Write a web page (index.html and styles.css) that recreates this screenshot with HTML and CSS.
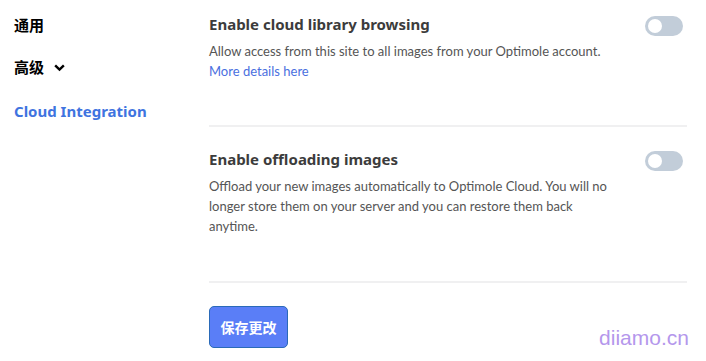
FILE: index.html
```html
<!DOCTYPE html>
<html lang="zh">
<head>
    <meta charset="UTF-8">
    <title>Optimole Settings</title>
    <link rel="stylesheet" href="styles.css">
</head>
<body>

<div class="layout">
    <nav class="sidebar">
        <a class="nav-item" href="#">通用</a>
        <a class="nav-item" href="#">高级 <svg class="chevron" width="13" height="13" viewBox="0 0 12 12"><path d="M2 4l4 4 4-4" fill="none" stroke="#000" stroke-width="2.2"/></svg></a>
        <a class="nav-item active" href="#">Cloud Integration</a>
    </nav>

    <main class="content">
        <div class="setting">
            <div class="setting-text">
                <h3>Enable cloud library browsing</h3>
                <p>Allow access from this site to all images from your Optimole account.<br><a href="#">More details here</a></p>
            </div>
            <span class="toggle"></span>
        </div>

        <div class="setting">
            <div class="setting-text">
                <h3>Enable offloading images</h3>
                <p>Offload your new images automatically to Optimole Cloud. You will no longer store them on your server and you can restore them back anytime.</p>
            </div>
            <span class="toggle"></span>
        </div>

        <div class="actions">
            <button class="save">保存更改</button>
            <span class="watermark">diiamo.cn</span>
        </div>
    </main>
</div>

</body>
</html>
```

FILE: styles.css
```css
body {
    margin: 0;
    font-family: 'Noto Sans', 'Noto Sans CJK SC', sans-serif;
    background: #fff;
    color: #3c3c3c;
}
.layout {
    display: flex;
}
.sidebar {
    width: 195px;
    padding: 13px 0 0 14px;
    display: flex;
    flex-direction: column;
    gap: 18px;
}
.nav-item {
    font-size: 15px;
    font-weight: 700;
    color: #000;
    text-decoration: none;
    line-height: 24px;
    display: flex;
    align-items: center;
    gap: 9px;
}
.nav-item.active {
    color: #3f74e0;
    margin-top: 2px;
}
.content {
    width: 478px;
}
.setting {
    display: flex;
    justify-content: space-between;
    align-items: flex-start;
    border-bottom: 2px solid #f0f0f1;
}
.setting:first-child {
    padding: 13px 0 44px;
}
.setting + .setting {
    padding: 21px 0 45px;
}
.setting-text h3 {
    margin: 0;
    font-size: 15px;
    font-weight: 700;
    line-height: 22px;
    color: #3c3c3c;
}
.setting-text p {
    margin: 6px 0 0;
    width: 410px;
    font-family: 'Lato', sans-serif;
    font-size: 13px;
    line-height: 20px;
    color: #555;
}
.setting-text a {
    color: #4a6fe0;
    text-decoration: none;
}
.toggle {
    position: relative;
    width: 38px;
    height: 20px;
    margin: 3px 4px 0 0;
    border-radius: 10px;
    background: #c2cdd9;
}
.toggle::after {
    content: "";
    position: absolute;
    left: 3px;
    top: 3px;
    width: 14px;
    height: 14px;
    border-radius: 50%;
    background: #fff;
}
.actions {
    display: flex;
    justify-content: space-between;
    align-items: flex-end;
    padding-top: 23px;
}
.save {
    width: 79px;
    height: 42px;
    border: 1px solid #2a6ab8;
    border-radius: 5px;
    background: #5a7ef7;
    color: #fff;
    font-family: 'Noto Sans CJK SC', sans-serif;
    font-size: 14px;
    font-weight: 700;
}
.watermark {
    font-family: 'Liberation Sans', sans-serif;
    font-size: 21px;
    color: #b497ec;
    margin: 0 -2px -2px 0;
}
```
